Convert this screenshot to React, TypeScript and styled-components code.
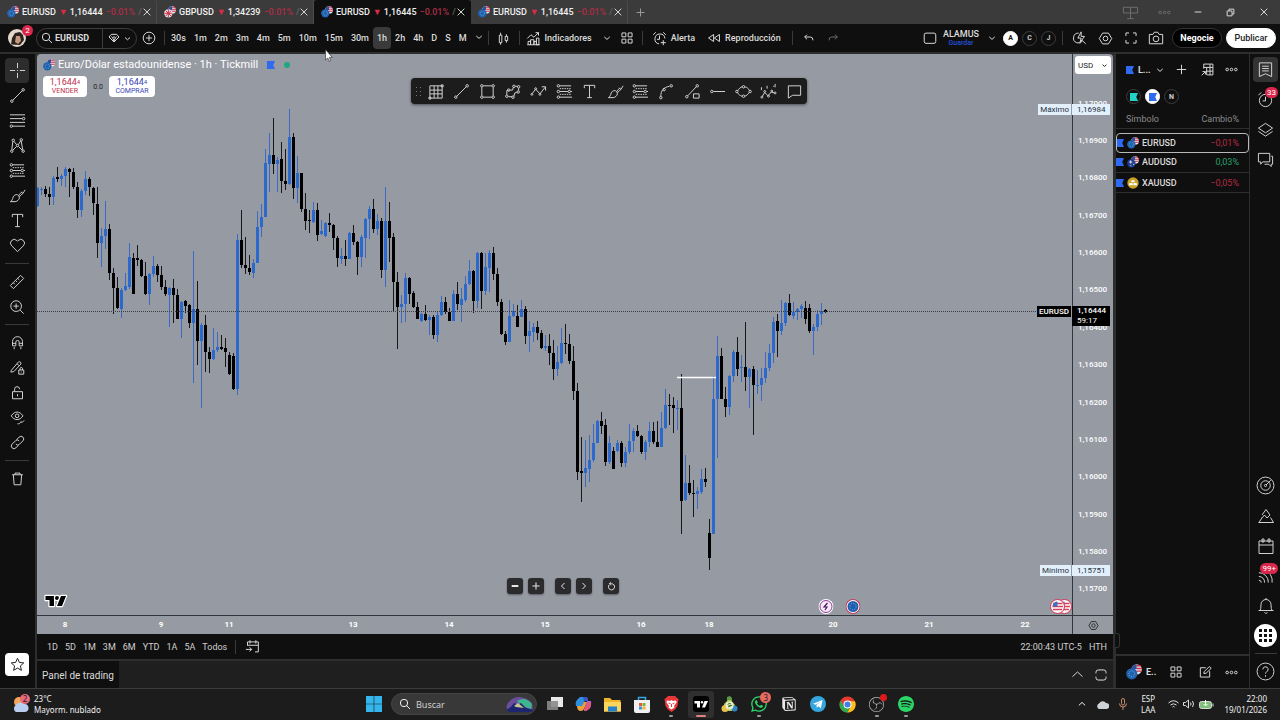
import React from 'react';
import styled, { createGlobalStyle, css } from 'styled-components';
import { FaWhatsapp } from 'react-icons/fa';
import { SiSpotify, SiNotion, SiObsstudio, SiBrave } from 'react-icons/si';

const UI_FONT = 'Roboto, "Liberation Sans", sans-serif';
const OS_FONT = '"Noto Sans", "Open Sans", sans-serif';

const GlobalStyle = createGlobalStyle`
  *, *::before, *::after { box-sizing: border-box; }
  body { margin: 0; background: #0f0f0f; font-family: ${UI_FONT}; color: #dbdbdb; overflow: hidden; }
  button, input, select { font-family: inherit; color: inherit; margin: 0; }
  button { background: none; border: 0; padding: 0; display: inline-flex; align-items: center; justify-content: center; cursor: pointer; }
  svg { display: block; flex: none; }
`;

/* ---------- line icons, drawn on an 18 unit grid ---------- */

const dot = (x: number, y: number, r = 1.3) => <circle key={`${x}-${y}`} cx={x} cy={y} r={r} />;

const ICONS: Record<string, React.ReactNode> = {
  cross: <path d="M9 1v5.5M9 11.5V17M1 9h5.5M11.5 9H17M8.5 9h1" />,
  trend: <><path d="M4 14 14 4" />{dot(3, 15)}{dot(15, 3)}</>,
  lines: <><path d="M1 3h16M1 7h13M1 11h16M4 15h13" />{dot(15.5, 7)}{dot(2.5, 15)}</>,
  pattern: <><path d="M3 13.5 4 5M5.200 4.500 8 8M10 10l4 4M13 4.500l1.500 9M8 10l-4 4M10 8l2.500-4" />{dot(3, 15)}{dot(4.5, 3.5)}{dot(13, 3)}{dot(15, 15)}{dot(9, 9)}</>,
  fib: <><path d="M4 3h12M4 9h8.500M15.500 9H17M4 15h13" /><path d="M4 6h12M4 12h12" strokeDasharray="1.500 1" />{dot(2.5, 3)}{dot(2.5, 9)}{dot(14, 9)}{dot(2.5, 15)}</>,
  brush: <path d="M1.500 15.500c2-1 2-2.500 3-5C5.500 8 9 7 10.500 9.500c1.500 3-1 5.500-4 6zM10.500 9c1-2 2-3 3.500-3.500M11 10c2.500-1.500 4.500-4 6-7M13 5l1.500 2" />,
  text: <path d="M3.500 5.500v-3h11v3M9 2.500v13M6.500 15.500h5" />,
  heart: <path d="M9 15.500 2.800 9.300a3.900 3.900 0 0 1 0-5.600 3.900 3.900 0 0 1 5.500 0l.7.800.7-.8a3.900 3.900 0 0 1 5.500 0 3.900 3.900 0 0 1 0 5.600z" />,
  ruler: <path d="M1.500 13 13 1.500 16.500 5 5 16.500zM5 10l1.500 1.500M7.500 7.500 9 9M10 5l1.500 1.500" />,
  zoomin: <><circle cx="8" cy="8" r="6" /><path d="M12.500 12.500 16.500 16.500M5 8h6M8 5v6" /></>,
  magnet: <path d="M3 13V8a6 6 0 0 1 12 0v5h-4V8.500a2 2 0 0 0-4 0V13zM3 10h4M11 10h4M5 14.500V17M13 14.500V17" />,
  penlock: <><path d="M1.500 12.500 10 2.500a2 2 0 0 1 3 2.500L4.500 14l-3.500.500zM8.500 4.500l2.500 2.500" /><path d="M10.500 12h6v5h-6zM12 12v-1.500a1.500 1.500 0 0 1 3 0V12M13.500 14v1" /></>,
  unlock: <path d="M3 8h12v8.500H3zM5.500 8V5a3 3 0 0 1 6 0M9 11v2.500" />,
  eye: <><path d="M1.500 7C4 3.500 6 2.500 8.500 2.500S13.500 4 15.500 7C13.500 10 11.500 11.500 8.500 11.500S3.500 10 1.500 7z" /><circle cx="8.5" cy="7" r="2.2" /><path d="M9 16.500c2 .5 3.500-.5 4-2.500l1.500 1L17 12.500" /></>,
  link: <path d="M8 5.500l3-3a3 3 0 0 1 4.500 4.500l-4 4A3 3 0 0 1 7 11M10 12.500l-3 3A3 3 0 0 1 2.500 11l4-4A3 3 0 0 1 11 7" />,
  trash: <path d="M2.500 4.500h13M6 4.500v-2h6v2M4 4.500 5 16.500h8l1-12" />,
  star: <path d="M9 1.500l2.200 5 5.300.600-4 3.600 1.200 5.300L9 13.300 4.300 16l1.200-5.300-4-3.600 5.300-.600z" />,
  grid9: <path d="M2 3h13v13H2zM2 7.500h13M2 11.500h13M6.500 3v13M10.500 3v13M1 15h2v2H1zM14 2h2v2h-2z" />,
  rect: <><path d="M4.500 3h9M4.500 15h9M3 4.500v9M15 4.500v9" />{dot(3, 3)}{dot(15, 3)}{dot(3, 15)}{dot(15, 15)}</>,
  shape: <><path d="M3 12.500V8h2M6.500 7.500H9L10 4.500M4.500 14.500h4M10.500 14l1-3.500 2-.500M15.500 8V5.500M12 3.500h2.500" />{dot(5, 7.5)}{dot(10.5, 3.5)}{dot(15.5, 4)}{dot(3, 14)}{dot(9.5, 15)}{dot(15, 9.5)}</>,
  zigzag: <><path d="M2.500 11 6 6.500l4.500 5L16 4.500M12.500 4h4v4" />{dot(2, 12, 1)}{dot(6, 6, 1)}{dot(10.5, 12, 1)}</>,
  curve: <><path d="M3 14c0-6 3-9.500 9-10.500" />{dot(3, 15.5)}{dot(6.5, 7)}{dot(14, 3)}</>,
  lineshape: <><path d="M4 13.500 13 4M10 11.500h6v4.500h-6z" />{dot(3, 14.5)}{dot(14, 3)}</>,
  hline: <><path d="M4.500 9H17" />{dot(3, 9)}</>,
  ellipse: <><path d="M3 8c1-2 3-3.500 4.500-4M10.500 4c2 .5 4 2 5 4M15 10c-1 2-3 3.500-4.500 4M7.500 14c-2-.5-4-2-5-4" />{dot(9, 4)}{dot(16, 9)}{dot(9, 14)}{dot(2, 9)}</>,
  elliott: <><path d="M2.500 14 5 10l3.500 3.500 3.500-4 3 1M1.500 4.500v3M7.500 3v3M16 1v3.500M14 3.500h1" />{dot(2, 15, 1)}{dot(5, 9, 1)}{dot(9, 14, 1)}{dot(12.500, 8.500, 1)}{dot(16, 10.500, 1)}</>,
  note: <path d="M2.500 3h13v10H7l-4.500 3z" />,
  candles: <path d="M4 5h3v9H4zM5.500 2v3M5.500 14v2.500M11 6.500h3v5h-3zM12.500 4v2.500M12.500 11.500V14" />,
  indicators: <><path d="M2.500 16.500v-4h3v4M5.500 16.500v-6h4v6M9.500 16.500v-4h3v4M12.500 16.500v-8h3v8zM1.500 16.500h15" /><path d="M1.500 9 6 4.500l3.500 3L15 2M11.500 2H15v3.500" /></>,
  layouts: <path d="M2.500 2.500h5v5h-5zM10.500 2.500h5v5h-5zM2.500 10.500h5v5h-5zM10.500 10.500h5v5h-5z" />,
  alarm: <path d="M15.500 9a6 6 0 1 0-7 6.500M9 5.500V10H6M1.500 4.500l3-3M16.500 4.500l-3-3M13.500 11v6M10.500 14h6" />,
  alarmPlain: <><circle cx="9" cy="10" r="6.5" /><path d="M9 6v4.500H6M1.500 4.500l3-3" /></>,
  rewind: <path d="M8.500 4.500v9L2 9zM16 4.500v9L9.500 9z" />,
  undo: <path d="M6 4 2.500 7.500 6 11M2.500 7.500H11q4 0 4 5" />,
  redo: <path d="M12 4l3.500 3.500L12 11M15.500 7.500H7q-4 0-4 5" />,
  square: <rect x="2.5" y="3.500" width="13" height="11.500" rx="2" />,
  quick: <><path d="M8 2.500a6 6 0 1 0 5 9M12.500 11.500l4 4M11 1 7 8.500h4L9.500 14 15 6.500h-4z" /></>,
  hex: <><path d="M5.500 2.500h7L16.500 9l-4 6.500h-7L1.500 9z" /><circle cx="9" cy="9" r="2.8" /></>,
  full: <path d="M2.500 6.500v-4h4M11.500 2.500h4v4M15.500 11.500v4h-4M6.500 15.500h-4v-4" />,
  camera: <><path d="M1.500 5h4l1.500-2.500h4L12.500 5h4v10.500h-15z" /><circle cx="9" cy="10" r="3.2" /></>,
  plus: <path d="M9 2.500v13M2.500 9h13" />,
  plusCircle: <><circle cx="9" cy="9" r="7.5" /><path d="M9 5v8M5 9h8" /></>,
  search: <><circle cx="7.5" cy="7.5" r="5.5" /><path d="M11.500 11.500 16.500 16.500" /></>,
  gem: <path d="M5 3.500h8l3.500 4L9 15 1.500 7.500zM5 7l2 1.500L9 7l2 1.500L13 7M7 8.500 9 14l2-5.500" />,
  chev: <path d="M4 7l5 4.500L14 7" />,
  chevUp: <path d="M2 12l7-6.500 7 6.500" />,
  close: <path d="M4 4l10 10M14 4 4 14" />,
  dots: <>{dot(3, 9, 1.8)}{dot(9, 9, 1.8)}{dot(15, 9, 1.8)}</>,
  min: <path d="M4 9h10" />,
  restore: <path d="M3.500 6.500h8v8h-8zM6.500 6.500v-3h8v8h-3" />,
  dock: <path d="M1.500 3.500h15v6h-15zM9 3.500v12M5.500 15.500h7" />,
  list: <><path d="M2.500 2h13v14.500L9 13.500l-6.500 3z" /><path d="M5.500 5.500h7M5.500 8h7M5.500 10.500h7" /></>,
  layers: <path d="M9 2.500 16.500 7.500 9 12.500 1.500 7.500zM1.500 11 9 16l7.500-5" />,
  chat: <path d="M1.500 2.500h12v9H6l-2 2.500v-2.500H1.500zM15 5.500h1.500V14H15v2.500L12.500 14H8" />,
  radar: <><circle cx="9" cy="9" r="8" /><circle cx="9" cy="9" r="4.5" /><circle cx="9" cy="9" r="1" /><path d="M9.500 8.500 14 4" /></>,
  mountain: <path d="M9 2.500 13 8l-3 3-2.500-3-2 2.500M9 2.500 5 8M2 15.500 5.500 10M16.500 15.500 13.500 10.500M1.500 15.500h15" />,
  calendar: <><path d="M2 4h14v12.500H2zM2 8h14" /><path d="M5 2h2v3H5zM11 2h2v3h-2z" /></>,
  stream: <path d="M2 6a10 10 0 0 1 10 10.500M7 3a12 12 0 0 1 9 13.500M2 10a6 6 0 0 1 6 6.500M2 14a2.500 2.500 0 0 1 2.500 2.500" />,
  bell: <path d="M3 13.500q1-1 1-6a5 5 0 0 1 10 0q0 5 1 6zM1.500 13.500h15M7.500 15.500a1.800 1.800 0 0 0 3 0M9 1v1.500" />,
  help: <><circle cx="9" cy="9" r="8" /><path d="M6.500 7a2.500 2.500 0 1 1 3.500 2.300q-1 .5-1 1.700M9 12.500v1.500" /></>,
  tableIcon: <path d="M4.500 2.500h11v13h-7M15.500 6.500h-11M15.500 11h-8M8 6.500v9M12 2.500v13M4.500 2.500V8M2 16l4.500-4.500M3 11.500h3.500V15" />,
  edit: <path d="M10 3.500H3v12h12V8M7.500 11 8 8.500 14.500 2 17 4.200 10.500 10.500z" />,
  goto: <path d="M3 8V3.500h13v12h-4M6 1.500v4M13 1.500v4M3 7.500h13M1 12.500h7M5.500 10 8 12.500 5.500 15" />,
  panel: <path d="M2.500 7V5.500q0-3 3-3H7M11 2.500h1.500q3 0 3 3V7M15.500 11v1.500q0 3-3 3H11M7 15.500H5.500q-3 0-3-3V11M6.500 2.500h5M6.500 15.500h5" />,
  reset: <path d="M5 6.500a5 5 0 1 0 4-2H6M8 2 5.500 4.500 8 7" />,
};

interface IconProps { name: string; size?: number; weight?: number }
const Icon = ({ name, size = 18, weight = 1 }: IconProps) => (
  <svg width={size} height={size} viewBox="0 0 18 18" fill="none" stroke="currentColor" strokeWidth={(weight * 18) / size} aria-hidden="true">
    {ICONS[name]}
  </svg>
);

/* ---------- currency pair badges ---------- */

type Pair = 'EUR' | 'GBP' | 'AUD' | 'XAU';
const PairIcon = ({ pair, size = 13 }: { pair: Pair; size?: number }) => (
  <svg width={size} height={size} viewBox="0 0 18 18" aria-hidden="true">
    {pair === 'XAU' ? (
      <>
        <circle cx="9" cy="9" r="8.5" fill="#c9a227" />
        <path d="M7 5h4l1 3H6zM3.500 9h4.500l1 3.500H2.800zM10 9h4.500l.8 3.500H9.300z" fill="#fff" />
      </>
    ) : (
      <>
        <circle cx="12" cy="6" r="5.8" fill="#e8e8f0" />
        <path d="M12 2h4.500M12 5h6M12 8h5.500" stroke="#d4283c" strokeWidth="1.6" />
        <path d="M6.300 6A5.800 5.800 0 0 1 12 .2V6z" fill="#2f4f9f" />
        <circle cx="6.5" cy="11" r="6.3" fill={pair === 'EUR' ? '#1f63b0' : pair === 'GBP' ? '#e9dfe6' : '#1c3f94'} />
        {pair === 'EUR' && <circle cx="6.500" cy="11" r="3.300" fill="none" stroke="#9fc0d8" strokeWidth="1" strokeDasharray="1 1.500" />}
        {pair === 'GBP' && <path d="M.5 11h12M6.500 5v12M2.500 7l8 8M10.500 7l-8 8" stroke="#c8324a" strokeWidth="1.500" />}
        {pair === 'AUD' && <path d="M3 9h5M5.500 6.500v5M9 12.500h2M5 14.500h1.500" stroke="#f0d8e0" strokeWidth="1.400" />}
      </>
    )}
  </svg>
);

const Flag = ({ color = '#2f6bf2', size = 9 }: { color?: string; size?: number }) => (
  <svg width={size} height={size} viewBox="0 0 9 9" aria-hidden="true"><path d="M0 0h9L7 4.500 9 9H0z" fill={color} /></svg>
);

/* ---------- frame ---------- */

const Page = styled.div`
  position: relative;
  display: flex;
  flex-direction: column;
  height: 100vh;
  min-height: 640px;
  font-size: 9px;
  line-height: 12px;
`;

const TabBar = styled.header`
  display: flex;
  align-items: stretch;
  height: 24px;
  background: #3b3b3b;
`;

const Tab = styled.div<{ $active?: boolean }>`
  display: flex;
  align-items: center;
  flex: 0 0 157px;
  min-width: 0;
  gap: 3px;
  padding: 0 3px 1px 7px;
  font-weight: 500;
  color: #f0f0f0;
  border-right: 1px solid ${p => (p.$active ? 'transparent' : '#4a4a4a')};
  background: ${p => (p.$active ? '#0f0f0f' : 'transparent')};
  border-radius: 3px 3px 0 0;
`;
const TabText = styled.span` flex: 1; min-width: 0; display: flex; gap: 3px; white-space: nowrap; `;
const Down = styled.span` width: 8px; color: #d92b48; `;
const Loss = styled.span` color: #ad2d45; `;
const Faint = styled.span` color: #666; `;
const IconButton = styled.button<{ $w?: number; $dim?: boolean }>`
  width: ${p => p.$w ?? 18}px;
  height: 20px;
  flex: none;
  color: ${p => (p.$dim ? '#6d6d6d' : '#d6d6d6')};
`;
const NewTab = styled(IconButton)` height: 24px; color: #9a9a9a; `;
const WindowControls = styled.div`
  margin-left: auto;
  display: flex;
  align-items: center;
`;

const Toolbar = styled.nav`
  display: flex;
  align-items: center;
  height: 28px;
  padding: 0 4px 0 8px;
  background: #0f0f0f;
  font-weight: 500;
`;
const VRule = styled.span<{ $m?: number }>`
  width: 1px;
  height: 14px;
  flex: none;
  margin: 0 ${p => p.$m ?? 4}px;
  background: #3a3a3a;
`;
const AvatarButton = styled.button`
  position: relative;
  width: 18px;
  height: 18px;
  margin-right: 10px;
`;
const Badge = styled.span`
  position: absolute;
  top: -4px;
  right: -7px;
  min-width: 11px;
  height: 11px;
  padding: 0 2px;
  border-radius: 6px;
  background: #d9274b;
  color: #fff;
  font-size: 8px;
  line-height: 11px;
  text-align: center;
`;
const SearchPill = styled.div`
  display: flex;
  align-items: center;
  height: 21px;
  border: 1px solid #3d3d3d;
  border-radius: 11px;
  padding-left: 4px;
  margin-right: 4px;
`;
const SymbolButton = styled.button` gap: 2px; width: 61px; justify-content: flex-start; font-size: 9px; font-weight: 700; height: 19px; `;
const GemButton = styled.button` width: 34px; height: 19px; gap: 3px; border-left: 1px solid #3d3d3d; `;
const Interval = styled.button<{ $on?: boolean }>`
  padding: 0 4px;
  height: 22px;
  font-size: 9px;
  font-weight: 500;
  border-radius: 4px;
  background: ${p => (p.$on ? '#3a3a3a' : 'none')};
`;
const Intervals = styled.div` display: flex; margin-left: -5px; `;
const TextButton = styled.button`
  gap: 4px;
  height: 22px;
  padding: 0 7px 0 5px;
  font-size: 9px;
  font-weight: 500;
`;
const ToolbarEnd = styled.div` margin-left: auto; display: flex; align-items: center; `;
const LayoutName = styled.button`
  flex-direction: column;
  width: 44px;
  font-size: 9px;
  line-height: 9px;
  font-weight: 500;
  small { font-size: 7px; line-height: 8px; color: #2450d8; }
`;
const RoundLetter = styled.button<{ $on?: boolean }>`
  width: 15px;
  height: 15px;
  margin: 0 2px;
  border-radius: 50%;
  font-size: 7px;
  font-weight: 700;
  border: 1px solid ${p => (p.$on ? '#fff' : '#3d3d3d')};
  background: ${p => (p.$on ? '#fff' : 'none')};
  color: ${p => (p.$on ? '#111' : '#cfcfcf')};
`;
const Pill = styled.button<{ $light?: boolean }>`
  height: 20px;
  width: 50px;
  margin-left: 4px;
  border-radius: 10px;
  font-size: 9px;
  font-weight: ${p => (p.$light ? 500 : 700)};
  border: 1px solid ${p => (p.$light ? '#fff' : '#333')};
  background: ${p => (p.$light ? '#fff' : '#000')};
  color: ${p => (p.$light ? '#222' : '#fff')};
`;

const Main = styled.main`
  flex: 1;
  min-height: 0;
  display: flex;
  background: #2e2e2e;
`;

const DrawRail = styled.aside`
  width: 35px;
  margin-right: 2px;
  margin-top: 2px;
  padding: 4px 6px 12px 5px;
  display: flex;
  flex-direction: column;
  background: #0f0f0f;
`;
const ToolButton = styled.button<{ $on?: boolean; $light?: boolean }>`
  width: 24px;
  height: 25px;
  flex: none;
  border-radius: 4px;
  color: #cfcfcf;
  ${p => p.$on && css`background: #2d2d2d;`}
  ${p => p.$light && css`height: 23px; margin-top: auto; background: #fff; color: #222;`}
`;
const HRule = styled.hr` width: 24px; height: 1px; flex: none; margin: 5px 0; border: 0; background: #3a3a3a; `;

const Center = styled.section` flex: 1; min-width: 0; padding-top: 2px; display: flex; flex-direction: column; `;

const ChartFrame = styled.div`
  position: relative;
  flex: 1;
  min-height: 0;
  display: grid;
  grid-template-columns: minmax(0, 1fr) 41px;
  grid-template-rows: minmax(0, 1fr) 19px;
  background: #969aa3;
  border-radius: 4px 4px 0 0;
  overflow: hidden;
`;
const Plot = styled.div` position: relative; min-height: 0; svg.candles { width: 100%; height: 100%; } `;
const PriceScale = styled.div`
  position: relative;
  border-left: 1px solid #33353c;
  display: flex;
  flex-direction: column;
  padding: 2px 2px 7px;
  color: #fff;
  font-size: 8px;
  font-weight: 500;
`;
const Currency = styled.label`
  position: relative;
  height: 18px;
  margin-bottom: 11px;
  color: #222;
  svg { position: absolute; right: 3px; top: 6px; }
  select {
    appearance: none;
    display: block;
    width: 100%;
    height: 18px;
    padding: 0 3px;
    border: 0;
    border-radius: 3px;
    background: #fff;
    font-size: 8px;
  }
`;
const PriceList = styled.ol`
  flex: 1;
  display: flex;
  flex-direction: column;
  list-style: none;
  margin: 0;
  padding: 0;
  li { flex: 1; display: flex; align-items: center; padding-left: 3px; }
`;
const TimeScale = styled.div`
  border-top: 1px solid #33353c;
  display: flex;
  align-items: center;
  padding-left: 28px;
  color: #fff;
  font-size: 8px;
  font-weight: 700;
`;
const TimeSlot = styled.span<{ $span: number }>`
  flex: ${p => p.$span} 0 0;
  min-width: 0;
  span { display: inline-block; transform: translateX(-50%); }
`;
const ScaleCorner = styled.div` border-top: 1px solid #33353c; border-left: 1px solid #33353c; display: flex; align-items: center; justify-content: center; color: #333; `;

const PriceTag = styled.div<{ $top: number; $dark?: boolean }>`
  position: absolute;
  right: 3px;
  top: ${p => p.$top}%;
  display: flex;
  align-items: flex-start;
  gap: 1px;
  font-size: 8px;
  line-height: 11px;
  color: ${p => (p.$dark ? '#fff' : '#26303f')};
  font-weight: ${p => (p.$dark ? 500 : 400)};
  span { padding: 0 2px; background: ${p => (p.$dark ? '#000' : '#e3f0fb')}; }
  span:last-child { width: 38px; padding: 0 5px; line-height: ${p => (p.$dark ? 10 : 11)}px; }
  small { display: block; font-size: 8px; font-weight: 400; }
`;

const Legend = styled.div`
  position: absolute;
  left: 6px;
  top: 4px;
  display: flex;
  align-items: center;
  gap: 3px;
  color: #fff;
  font-size: 11px;
  font-weight: 400;
  line-height: 14px;
  white-space: nowrap;
`;
const LiveDot = styled.span` width: 6px; height: 6px; margin-left: 6px; border-radius: 50%; background: #1fa882; `;
const LegendFlag = styled.span` margin-left: 6px; `;
const Quotes = styled.div` position: absolute; left: 6px; top: 22px; display: flex; align-items: center; gap: 5px; font-size: 7px; color: #222; `;
const QuoteButton = styled.button<{ $buy?: boolean }>`
  flex-direction: column;
  width: ${p => (p.$buy ? 46 : 44)}px;
  height: 21px;
  border-radius: 4px;
  background: #fff;
  color: ${p => (p.$buy ? '#3a45b5' : '#c0304c')};
  font-size: 9px;
  line-height: 9px;
  b { font-weight: 400; display: flex; }
  sup { font-size: 6px; line-height: 7px; vertical-align: baseline; }
  span { font-size: 7px; line-height: 9px; }
`;
const Spread = styled.span` width: 12px; text-align: center; `;
const FloatingTools = styled.div`
  position: absolute;
  left: 374px;
  top: 24px;
  width: 396px;
  height: 26px;
  padding: 0 0 0 4px;
  display: flex;
  align-items: center;
  justify-content: space-between;
  background: #1c1c1c;
  color: #d0d0d0;
  border-radius: 4px;
  box-shadow: 0 1px 3px rgba(0, 0, 0, 0.5);
  button { width: 25px; height: 24px; }
`;
const Grip = styled.span` width: 8px; `;
const ZoomControls = styled.div` position: absolute; left: 470px; bottom: 21px; display: flex; gap: 5px; color: #e6e6e6; `;
const ZoomButton = styled.button<{ $gap?: boolean }>`
  width: 16px;
  height: 16px;
  margin-left: ${p => (p.$gap ? 6 : 0)}px;
  border-radius: 3px;
  background: #2b2b2e;
  box-shadow: 0 1px 2px rgba(0, 0, 0, 0.4);
`;
const Logo = styled.a` position: absolute; left: 7px; bottom: 7px; `;
const EventMark = styled.button<{ $left: number }>` position: absolute; left: ${p => p.$left}%; bottom: 1px; transform: translateX(-50%); `;

const RangeBar = styled.div`
  height: 25px;
  display: flex;
  align-items: center;
  padding: 0 2px 0 7px;
  background: #0f0f0f;
  color: #cfcfcf;
`;
const RangeButton = styled.button` height: 20px; padding: 0 4px 0 3px; font-size: 9px; `;
const Clock = styled.div` margin-left: auto; display: flex; `;
const TradingBar = styled.div`
  height: 27px;
  margin-top: 2px;
  display: flex;
  align-items: center;
  background: #1f1f1f;
`;
const TradingTab = styled.button` height: 27px; padding: 1px 5px 0; background: #0f0f0f; font-size: 10px; color: #dbdbdb; `;

const WatchPanel = styled.aside`
  position: relative;
  width: 133px;
  margin: 2px 1px 0 3px;
  display: flex;
  flex-direction: column;
  background: #0f0f0f;
`;
const WatchHead = styled.div` display: flex; align-items: center; justify-content: space-between; height: 31px; padding: 0 11px 0 10px; `;
const ListButton = styled.button` gap: 4px; font-size: 9px; font-weight: 700; `;
const Lists = styled.div` display: flex; gap: 0; padding: 4px 8px 0; height: 25px; `;
const WatchTable = styled.table`
  width: 100%;
  border-collapse: collapse;
  font-size: 9px;
  th { height: 18px; padding: 0 10px; font-weight: 400; color: #8c8c8c; text-align: left; border-bottom: 1px solid #2e2e2e; }
  th:last-child, td:last-child { text-align: right; }
  td { height: 20px; padding: 0 10px 0 0; border-bottom: 1px solid #2e2e2e; font-weight: 500; }
  td:last-child { font-weight: 400; }
  tbody::before { content: ''; display: block; height: 4px; }
  tr.on td { border: 0; }
  tr.on { outline: 1px solid #b8b8b8; outline-offset: -1px; border-radius: 4px; }
`;
const SymbolCell = styled.span` display: flex; align-items: center; gap: 3px; b { font-weight: 500; } `;
const Change = styled.span<{ $up?: boolean }>` color: ${p => (p.$up ? '#25a06c' : '#b32b44')}; `;
const Handle = styled.span` position: absolute; left: -1px; bottom: 40px; width: 5px; height: 15px; border: 1px solid #333; border-left: 0; border-radius: 0 3px 3px 0; background: #0f0f0f; `;
const WatchFoot = styled.div`
  margin-top: auto;
  height: 34px;
  border-top: 2px solid #2e2e2e;
  display: flex;
  align-items: center;
  justify-content: space-between;
  padding: 0 10px;
`;

const RightRail = styled.aside`
  width: 30px;
  margin-top: 2px;
  padding: 3px 2px 4px 3px;
  display: flex;
  flex-direction: column;
  align-items: center;
  gap: 5px;
  background: #0f0f0f;
`;
const RailButton = styled.button<{ $on?: boolean; $push?: boolean }>`
  position: relative;
  width: 25px;
  height: 25px;
  flex: none;
  border-radius: 4px;
  color: #d0d0d0;
  background: ${p => (p.$on ? '#333' : 'none')};
  margin-top: ${p => (p.$push ? 'auto' : 0)};
`;
const RailBadge = styled(Badge)` top: 0; right: 0; `;
const RailRule = styled(HRule)` margin: 0; width: 22px; `;
const Apps = styled.span`
  width: 23px;
  height: 23px;
  border-radius: 50%;
  background: #fff;
  display: flex;
  align-items: center;
  justify-content: center;
`;

const Taskbar = styled.footer`
  height: 32px;
  flex: none;
  display: grid;
  grid-template-columns: 1fr auto 1fr;
  align-items: center;
  padding-bottom: 1px;
  background: #1c1c1c;
  border-top: 1px solid #3c3c3c;
  font-family: ${OS_FONT};
  font-size: 8px;
  line-height: 11px;
  color: #f0f0f0;
`;
const Weather = styled.button` justify-self: start; margin-left: 10px; gap: 3px; text-align: left; font-size: 8px; line-height: 11px; `;
const TaskCenter = styled.div` display: flex; align-items: center; `;
const TaskSearch = styled.label`
  display: flex;
  align-items: center;
  width: 146px;
  height: 22px;
  margin: 0 4px;
  padding: 0 1px 0 7px;
  border-radius: 11px;
  background: #383838;
  border: 1px solid #444;
  input { flex: 1; width: 0; margin-left: 5px; border: 0; outline: 0; background: none; font-size: 9px; padding: 0; }
  input::placeholder { color: #d0d0d0; opacity: 1; }
`;
const TaskApps = styled.div` display: flex; justify-content: space-between; width: 378px; `;
const TaskButton = styled.button<{ $on?: boolean }>`
  position: relative;
  width: 26px;
  height: 27px;
  border-radius: 3px;
  background: ${p => (p.$on ? '#2f2f2f' : 'none')};
`;
const Running = styled.span<{ $on?: boolean }>`
  position: absolute;
  bottom: 1px;
  width: ${p => (p.$on ? 10 : 4)}px;
  height: 2px;
  border-radius: 1px;
  background: ${p => (p.$on ? '#e08080' : '#9a9a9a')};
`;
const AppBadge = styled.span` position: absolute; top: 1px; right: 1px; width: 11px; height: 11px; border-radius: 50%; background: #e8695f; color: #222; font-size: 8px; line-height: 11px; text-align: center; `;
const RecDot = styled.span` position: absolute; top: 3px; right: 3px; width: 7px; height: 7px; border-radius: 50%; background: #e01818; `;
const Tray = styled.div` justify-self: end; display: flex; align-items: center; gap: 10px; padding-right: 13px; `;
const TrayGroup = styled.span` display: flex; gap: 4px; align-items: center; margin-left: 3px; `;
const TrayLang = styled.span` text-align: center; margin-left: 4px; `;
const TrayClock = styled.time` text-align: right; `;

const Pointer = styled.div` position: absolute; left: 325px; top: 49px; pointer-events: none; `;

/* ---------- chart data: colour, high, body top, body bottom, low ---------- */

const CANDLES = `
b187,188,206,207 b187,189,190,195 k186,189,194,197 k187,194,197,205 b176,178,197,205 k167,177,179,182 b174,176,179,186 b167,169,176,187 k168,169,172,197 k168,172,187,189
k182,187,210,218 b189,191,210,217 b171,179,191,195 k177,179,187,196 k187,188,203,215 k187,204,243,258 b228,236,243,267 b201,229,236,249 k224,229,273,280 k268,273,288,314
k277,288,308,309 b288,290,309,318 b273,286,290,291 b243,257,287,289 k253,258,294,294 k245,258,260,266 k259,260,276,277 k262,276,294,295 b273,274,294,305 b256,266,274,277
k264,266,275,282 k266,275,287,290 k280,287,294,296 b287,288,295,327 k279,288,295,323 k289,295,319,319 b301,302,319,338 k300,301,306,313 k304,305,323,328 b251,309,323,383
k281,309,341,365 b323,325,341,408 k315,325,352,372 k347,352,359,373 b328,350,359,360 b332,347,350,352 k335,347,349,350 k338,348,352,367 k352,355,374,375 k353,356,389,390
b234,240,389,395 k210,240,265,268 k237,265,268,274 k255,268,272,275 b259,263,273,278 b211,227,263,263 b204,217,227,237 b149,163,217,217 b133,155,164,192 k118,155,164,174
b157,160,164,192 k142,159,181,193 k149,181,184,190 b109,137,184,185 k133,137,188,199 b156,173,188,203 k173,173,209,212 k193,209,221,230 k210,220,221,233 b202,210,222,223
k203,210,235,241 b220,231,234,235 b222,223,236,237 k213,223,225,232 k224,225,238,250 k236,238,258,267 b248,256,259,264 k240,256,259,266 b232,233,259,259 k225,233,242,245
k241,242,257,275 b235,237,257,267 b218,219,238,258 b206,209,219,239 k199,209,229,233 b214,221,229,235 k218,221,270,278 b187,221,270,287 k202,221,238,262 k233,237,282,312
k272,282,307,349 b295,304,307,323 b273,278,304,322 k277,278,294,304 k291,293,307,308 k302,307,319,319 b313,314,321,322 k305,314,320,321 b315,317,320,335 k315,317,335,339
b311,315,335,342 b296,302,315,316 k297,302,312,314 k308,312,321,321 b290,294,321,321 k282,294,304,310 b288,299,305,322 b276,284,300,302 b260,271,284,285 k270,271,301,313
b252,253,301,308 k252,253,291,309 b253,267,291,295 b250,253,268,292 k247,253,274,280 k268,274,302,306 k299,302,334,335 k331,334,342,345 b300,316,342,342 b304,311,316,317
k305,316,327,327 b300,309,317,317 k306,309,336,344 b321,331,336,352 b323,327,332,342 k321,327,333,340 k330,333,348,349 b335,346,348,351 k334,346,353,365 k340,353,369,380
b346,362,369,376 b328,343,363,364 k324,343,344,354 k334,344,361,364 k346,361,391,400 k383,391,472,480 k437,471,473,502 b440,468,473,487 b435,460,469,482 b424,443,460,462
b420,421,443,443 k412,421,426,434 k419,425,462,466 b436,443,462,464 k447,451,469,469 b440,443,451,452 k441,443,463,467 b447,452,463,467 b424,441,452,454 b428,431,441,452
k425,431,436,437 k435,436,452,454 b440,442,452,460 b422,431,442,447 k422,431,442,444 k421,442,447,447 b412,428,447,447 b389,405,428,429 k394,405,406,425 k397,405,408,433
b400,408,409,430 k374,408,501,534 b455,483,500,501 k465,483,493,495 k480,493,494,517 b487,491,494,509 b469,479,492,494 k468,479,482,487 k519,533,558,570 b376,399,534,534
b336,356,399,458 k348,356,399,399 k387,399,407,417 b375,376,407,415 b350,352,376,382 k337,352,369,376 b355,367,368,382 k322,367,377,391 b368,369,377,408 k366,369,385,435
b370,385,386,394 b368,378,385,401 b352,368,378,383 b344,353,368,371 b317,322,353,363 k314,321,331,357 b300,323,331,335 b302,303,323,326 k294,303,315,316 b302,312,316,319
b308,309,312,320 b304,306,309,318 k301,308,319,324 k304,308,331,333 b324,327,331,355 b310,314,327,331 b303,311,314,325 k309,310,312,313
`.trim().split(/\s+/).map(s => ({ up: s[0] === 'b', v: s.slice(1).split(',').map(Number) }));

const Candles = () => (
  <svg className="candles" viewBox="37 54 1035 561" preserveAspectRatio="none" role="img" aria-label="EURUSD 1h">
    {CANDLES.map(({ up, v: [h, t, b, l] }, i) => (
      <g key={i}>
        <rect x={37 + i * 4} y={h} width="1" height={Math.max(1, l - h)} fill={up ? '#3b69c4' : '#17181c'} />
        <rect x={36 + i * 4} y={t} width="3" height={Math.max(1, b - t)} fill={up ? '#2c69cd' : '#000'} />
      </g>
    ))}
    <path d="M677 377.500h39" stroke="#fff" strokeWidth="1.4" />
    <path d="M37 311.500h1002" stroke="#3c3e46" strokeDasharray="1 1" />
  </svg>
);

const PRICES = ['1,17000', '1,16900', '1,16800', '1,16700', '1,16600', '1,16500', '1,16400', '1,16300', '1,16200', '1,16100', '1,16000', '1,15900', '1,15800', '1,15700'];
const DAYS: [string, number][] = [['8', 96], ['9', 68], ['11', 124], ['13', 96], ['14', 96], ['15', 96], ['16', 68], ['18', 124], ['20', 96], ['21', 96], ['22', 47]];
const TABS: { pair: Pair; name: string; price: string; on?: boolean }[] = [
  { pair: 'EUR', name: 'EURUSD', price: '1,16444' },
  { pair: 'GBP', name: 'GBPUSD', price: '1,34239' },
  { pair: 'EUR', name: 'EURUSD', price: '1,16445', on: true },
  { pair: 'EUR', name: 'EURUSD', price: '1,16445' },
];
const WATCH: { pair: Pair; name: string; change: string; up?: boolean }[] = [
  { pair: 'EUR', name: 'EURUSD', change: '−0,01%' },
  { pair: 'AUD', name: 'AUDUSD', change: '0,03%', up: true },
  { pair: 'XAU', name: 'XAUUSD', change: '−0,05%' },
];
const INTERVALS = ['30s', '1m', '2m', '3m', '4m', '5m', '10m', '15m', '30m', '1h', '2h', '4h', 'D', 'S', 'M'];
const FLOATING = ['grid9', 'trend', 'rect', 'shape', 'zigzag', 'fib', 'text', 'brush', 'fib', 'curve', 'lineshape', 'hline', 'ellipse', 'elliott', 'note'];

const TvMark = ({ width }: { width: number }) => (
  <svg width={width} height={(width * 14) / 24} viewBox="0 0 24 14" aria-hidden="true">
    <g fill="#000" stroke="#fff" strokeWidth="2.4" paintOrder="stroke" strokeLinejoin="round">
      <path d="M1.500 2h8.500v10H5.500V6H1.500z" /><circle cx="13" cy="4" r="2" /><path d="M17 2h5l-4 10h-5z" />
    </g>
  </svg>
);

const FlagMark = ({ kind }: { kind: 'bolt' | 'eu' | 'us' }) => (
  <svg width={kind === 'us' ? 22 : 15} height="15" viewBox={kind === 'us' ? '0 0 22 15' : '0 0 15 15'} aria-hidden="true">
    {kind === 'bolt' && <><circle cx="7.5" cy="7.5" r="7.5" fill="#fff" /><circle cx="7.5" cy="7.5" r="6" fill="#f6e9f8" stroke="#8b3a9c" /><path d="M9 4 5.500 8h3L6.500 11" fill="none" stroke="#4a1458" strokeWidth="1.2" /></>}
    {kind === 'eu' && <><circle cx="7.5" cy="7.5" r="7.5" fill="#c43a58" /><circle cx="7.5" cy="7.5" r="6.500" fill="#fff" /><circle cx="7.5" cy="7.5" r="5.500" fill="#1d5fae" /><circle cx="7.5" cy="7.5" r="3.2" fill="none" stroke="#8fb4d8" strokeDasharray="1 1.500" /></>}
    {kind === 'us' && [7, 0].map(x => (
      <g key={x} transform={`translate(${x} 0)`}>
        <circle cx="7.5" cy="7.5" r="7" fill="#fff" stroke="#d2304e" />
        <path d="M3 4.500h9.500M2.500 7.500h10.500M3 10.500h9" stroke="#d8405a" strokeWidth="1.5" />
        <path d="M2.500 7.500A5 5 0 0 1 7.500 2.500v5z" fill="#3d6fc4" />
      </g>
    ))}
  </svg>
);

const Chrome = () => (
  <svg width="17" height="17" viewBox="0 0 18 18" aria-hidden="true">
    <circle cx="9" cy="9" r="8.5" fill="#e33b2e" />
    <path d="M1.640 4.750A8.500 8.500 0 0 0 9 17.500l3.500-6.500L5.500 11z" fill="#2da94f" />
    <path d="M16.900 5.500H9l3.500 6L9 17.500A8.500 8.500 0 0 0 16.900 5.500z" fill="#fbc116" />
    <circle cx="9" cy="9" r="4.2" fill="#fff" /><circle cx="9" cy="9" r="3.2" fill="#3f7fe8" />
  </svg>
);

const Telegram = () => (
  <svg width="16" height="16" viewBox="0 0 16 16" aria-hidden="true">
    <circle cx="8" cy="8" r="8" fill="#35a6de" />
    <path d="M3 7.800 12.500 4l-1.600 8.300-2.700-2-1.400 1.400-.4-2.600L10.500 6 5.500 8.800z" fill="#fff" />
  </svg>
);

export default function App() {
  return (
    <>
      <GlobalStyle />
      <Page>
        <TabBar>
          {TABS.map((t, i) => (
            <Tab key={i} $active={t.on}>
              <PairIcon pair={t.pair} size={12} />
              <TabText><span>{t.name}</span><Down>▼</Down><span>{t.price}</span><Loss>−0.01%</Loss><Faint>/</Faint></TabText>
              <IconButton $w={12} aria-label="Cerrar pestaña"><Icon name="close" size={12} /></IconButton>
            </Tab>
          ))}
          <NewTab $w={24} aria-label="Nueva pestaña"><Icon name="plus" size={11} /></NewTab>
          <WindowControls>
            <IconButton $w={30} $dim aria-label="Acoplar"><Icon name="dock" size={17} /></IconButton>
            <VRule $m={1} />
            <IconButton $w={33} $dim aria-label="Más"><Icon name="dots" size={13} /></IconButton>
            <IconButton $w={33} aria-label="Minimizar"><Icon name="min" size={12} /></IconButton>
            <IconButton $w={33} aria-label="Restaurar"><Icon name="restore" size={11} /></IconButton>
            <IconButton $w={33} aria-label="Cerrar"><Icon name="close" size={12} /></IconButton>
          </WindowControls>
        </TabBar>

        <Toolbar>
          <AvatarButton aria-label="Perfil">
            <svg width="18" height="18" viewBox="0 0 18 18"><circle cx="9" cy="9" r="9" fill="#e4d8cc" /><path d="M3 15.500 4 9l3-5 5-1 3 3 1 5-4 5z" fill="#2b211e" /><path d="M8 7h4l1 5-3 3-3-2z" fill="#c79a80" /></svg>
            <Badge>2</Badge>
          </AvatarButton>
          <SearchPill>
            <SymbolButton><Icon name="search" size={12} />EURUSD</SymbolButton>
            <GemButton aria-label="Símbolos"><Icon name="gem" size={12} /><Icon name="chev" size={9} /></GemButton>
          </SearchPill>
          <IconButton $w={16} aria-label="Comparar"><Icon name="plusCircle" size={14} /></IconButton>
          <VRule $m={7} />
          <Intervals>
            {INTERVALS.map(t => <Interval key={t} $on={t === '1h'}>{t}</Interval>)}
            <IconButton $w={16} aria-label="Intervalos"><Icon name="chev" size={10} /></IconButton>
          </Intervals>
          <VRule $m={1} />
          <IconButton $w={28} aria-label="Velas"><Icon name="candles" size={15} /></IconButton>
          <VRule $m={1} />
          <TextButton><Icon name="indicators" size={15} />Indicadores</TextButton>
          <IconButton $w={17} aria-label="Favoritos"><Icon name="chev" size={10} /></IconButton>
          <IconButton $w={22} aria-label="Plantillas"><Icon name="layouts" size={14} /></IconButton>
          <VRule />
          <TextButton><Icon name="alarm" size={15} />Alerta</TextButton>
          <TextButton><Icon name="rewind" size={14} />Reproducción</TextButton>
          <VRule />
          <IconButton $w={24} aria-label="Deshacer"><Icon name="undo" size={12} /></IconButton>
          <IconButton $w={24} $dim aria-label="Rehacer"><Icon name="redo" size={12} /></IconButton>
          <ToolbarEnd>
            <IconButton aria-label="Diseño"><Icon name="square" size={16} /></IconButton>
            <LayoutName>ALAMUS<small>Guardar</small></LayoutName>
            <IconButton $w={18} aria-label="Diseños"><Icon name="chev" size={10} /></IconButton>
            <RoundLetter $on>A</RoundLetter><RoundLetter>C</RoundLetter><RoundLetter>J</RoundLetter>
            <VRule />
            <IconButton $w={25} aria-label="Búsqueda rápida"><Icon name="quick" size={15} /></IconButton>
            <IconButton $w={26} aria-label="Configuración"><Icon name="hex" size={15} /></IconButton>
            <IconButton $w={25} aria-label="Pantalla completa"><Icon name="full" size={14} /></IconButton>
            <IconButton $w={25} aria-label="Captura"><Icon name="camera" size={16} /></IconButton>
            <Pill>Negocie</Pill>
            <Pill $light>Publicar</Pill>
          </ToolbarEnd>
        </Toolbar>

        <Main>
          <DrawRail>
            {['cross', 'trend', 'lines', 'pattern', 'fib', 'brush', 'text', 'heart'].map(n => <ToolButton key={n} $on={n === 'cross'} aria-label={n}><Icon name={n} size={17} /></ToolButton>)}
            <HRule />
            {['ruler', 'zoomin'].map(n => <ToolButton key={n} aria-label={n}><Icon name={n} size={16} /></ToolButton>)}
            <HRule />
            {['magnet', 'penlock', 'unlock', 'eye', 'link'].map(n => <ToolButton key={n} aria-label={n}><Icon name={n} size={15} /></ToolButton>)}
            <HRule />
            <ToolButton aria-label="Eliminar"><Icon name="trash" size={15} /></ToolButton>
            <ToolButton $light aria-label="Favoritos"><Icon name="star" size={15} /></ToolButton>
          </DrawRail>

          <Center>
            <ChartFrame>
              <Plot>
                <Candles />
                <Legend>
                  <PairIcon pair="EUR" size={12} />
                  <span>Euro/Dólar estadounidense · 1h · Tickmill</span>
                  <LegendFlag><Flag size={8} /></LegendFlag>
                  <LiveDot />
                </Legend>
                <Quotes>
                  <QuoteButton><b>1,1644<sup>4</sup></b><span>VENDER</span></QuoteButton>
                  <Spread>0.0</Spread>
                  <QuoteButton $buy><b>1,1644<sup>4</sup></b><span>COMPRAR</span></QuoteButton>
                </Quotes>
                <FloatingTools>
                  <Grip><svg width="8" height="9" viewBox="0 0 8 9" fill="#777"><path d="M1 0h1v1H1zM5 0h1v1H5zM1 4h1v1H1zM5 4h1v1H5zM1 8h1v1H1zM5 8h1v1H5z" /></svg></Grip>
                  {FLOATING.map((n, i) => <button key={i} aria-label={n}><Icon name={n} size={17} /></button>)}
                </FloatingTools>
                <ZoomControls>
                  <ZoomButton aria-label="Alejar"><Icon name="min" size={12} weight={2} /></ZoomButton>
                  <ZoomButton aria-label="Acercar"><Icon name="plus" size={10} weight={1} /></ZoomButton>
                  <ZoomButton $gap aria-label="Izquierda"><svg width="8" height="8" viewBox="0 0 8 8" fill="none" stroke="currentColor"><path d="M5.500 1 2.500 4l3 3" /></svg></ZoomButton>
                  <ZoomButton aria-label="Derecha"><svg width="8" height="8" viewBox="0 0 8 8" fill="none" stroke="currentColor"><path d="M2.500 1l3 3-3 3" /></svg></ZoomButton>
                  <ZoomButton $gap aria-label="Restablecer"><Icon name="reset" size={11} /></ZoomButton>
                </ZoomControls>
                <Logo href="#" aria-label="TradingView"><TvMark width={24} /></Logo>
                <EventMark $left={76.2} aria-label="Evento"><FlagMark kind="bolt" /></EventMark>
                <EventMark $left={78.84} aria-label="Evento UE"><FlagMark kind="eu" /></EventMark>
                <EventMark $left={98.9} aria-label="Evento EE. UU."><FlagMark kind="us" /></EventMark>
              </Plot>
              <PriceScale>
                <Currency>
                  <select aria-label="Divisa" defaultValue="USD"><option>USD</option></select>
                  <Icon name="chev" size={7} />
                </Currency>
                <PriceList>{PRICES.map(p => <li key={p}>{p}</li>)}</PriceList>
              </PriceScale>
              <TimeScale>{DAYS.map(([d, s]) => <TimeSlot key={d} $span={s}><span>{d}</span></TimeSlot>)}</TimeScale>
              <ScaleCorner><Icon name="hex" size={11} /></ScaleCorner>
              <PriceTag $top={8.7}><span>Máximo</span><span>1,16984</span></PriceTag>
              <PriceTag $top={43.4} $dark><span>EURUSD</span><span>1,16444<small>59:17</small></span></PriceTag>
              <PriceTag $top={88.1}><span>Mínimo</span><span>1,15751</span></PriceTag>
            </ChartFrame>
            <RangeBar>
              {['1D', '5D', '1M', '3M', '6M', 'YTD', '1A', '5A', 'Todos'].map(r => <RangeButton key={r}>{r}</RangeButton>)}
              <VRule />
              <IconButton $w={24} aria-label="Ir a fecha"><Icon name="goto" size={15} /></IconButton>
              <Clock><RangeButton>22:00:43 UTC-5</RangeButton><RangeButton>HTH</RangeButton></Clock>
            </RangeBar>
            <TradingBar>
              <TradingTab>Panel de trading</TradingTab>
              <WindowControls>
                <IconButton $w={24} aria-label="Expandir"><Icon name="chevUp" size={13} /></IconButton>
                <IconButton $w={24} aria-label="Maximizar"><Icon name="panel" size={14} /></IconButton>
              </WindowControls>
            </TradingBar>
          </Center>

          <WatchPanel>
            <WatchHead>
              <ListButton><Flag size={8} />L...<Icon name="chev" size={10} /></ListButton>
              <IconButton aria-label="Añadir"><Icon name="plus" size={13} /></IconButton>
              <IconButton aria-label="Tabla"><Icon name="tableIcon" size={15} /></IconButton>
              <IconButton $w={14} aria-label="Más"><Icon name="dots" size={13} /></IconButton>
            </WatchHead>
            <Lists>
              <RoundLetter aria-label="Lista verde"><Flag color="#22d3c5" size={8} /></RoundLetter>
              <RoundLetter $on aria-label="Lista azul"><Flag size={8} /></RoundLetter>
              <RoundLetter>N</RoundLetter>
            </Lists>
            <WatchTable>
              <thead><tr><th>Símbolo</th><th>Cambio%</th></tr></thead>
              <tbody>
                {WATCH.map((w, i) => (
                  <tr key={w.name} className={i === 0 ? 'on' : undefined}>
                    <td><SymbolCell><Flag size={8} /><PairIcon pair={w.pair} size={12} /><b>{w.name}</b></SymbolCell></td>
                    <td><Change $up={w.up}>{w.change}</Change></td>
                  </tr>
                ))}
              </tbody>
            </WatchTable>
            <Handle />
            <WatchFoot>
              <ListButton><PairIcon pair="EUR" size={16} />E..</ListButton>
              <IconButton aria-label="Cuadrícula"><Icon name="layouts" size={14} /></IconButton>
              <IconButton aria-label="Editar"><Icon name="edit" size={14} /></IconButton>
              <IconButton $w={14} aria-label="Más"><Icon name="dots" size={13} /></IconButton>
            </WatchFoot>
          </WatchPanel>

          <RightRail>
            <RailButton $on aria-label="Lista de seguimiento"><Icon name="list" size={17} /></RailButton>
            <RailButton aria-label="Alertas"><Icon name="alarmPlain" size={17} /><RailBadge>33</RailBadge></RailButton>
            <RailButton aria-label="Árbol de objetos"><Icon name="layers" size={17} /></RailButton>
            <RailButton aria-label="Chats"><Icon name="chat" size={17} /></RailButton>
            <RailButton $push aria-label="Filtros"><Icon name="radar" size={19} /></RailButton>
            <RailButton aria-label="Pine"><Icon name="mountain" size={18} /></RailButton>
            <RailButton aria-label="Calendarios"><Icon name="calendar" size={18} /></RailButton>
            <RailButton aria-label="Comunidad"><Icon name="stream" size={17} /><RailBadge>99+</RailBadge></RailButton>
            <RailButton aria-label="Notificaciones"><Icon name="bell" size={18} /></RailButton>
            <RailButton aria-label="Productos"><Apps><svg width="13" height="13" viewBox="0 0 13 13" fill="#111"><path d="M0 0h3v3H0zM5 0h3v3H5zM10 0h3v3h-3zM0 5h3v3H0zM5 5h3v3H5zM10 5h3v3h-3zM0 10h3v3H0zM5 10h3v3H5zM10 10h3v3h-3z" /></svg></Apps></RailButton>
            <RailRule />
            <RailButton aria-label="Ayuda"><Icon name="help" size={19} /></RailButton>
          </RightRail>
        </Main>

        <Taskbar>
          <Weather>
            <svg width="21" height="20" viewBox="0 0 21 20"><circle cx="9" cy="8" r="5" fill="#f2a35c" /><path d="M6 18a4 4 0 0 1 0-7 5 5 0 0 1 8-1 4 4 0 0 1 1 8z" fill="#b9cdf0" /><circle cx="15" cy="5" r="5" fill="#e8697c" /><text x="15" y="8" textAnchor="middle" fontSize="8" fill="#222">2</text></svg>
            <span>23°C<br />Mayorm. nublado</span>
          </Weather>
          <TaskCenter>
            <TaskButton aria-label="Inicio"><svg width="16" height="16" viewBox="0 0 16 16"><path d="M0 0h7.700v7.700H0zM8.300 0H16v7.700H8.300zM0 8.300h7.700V16H0zM8.300 8.300H16V16H8.300z" fill="#35b5ee" /></svg></TaskButton>
            <TaskSearch>
              <Icon name="search" size={12} />
              <input type="search" placeholder="Buscar" aria-label="Buscar" />
              <svg width="30" height="18" viewBox="0 0 30 18"><path d="M3 16Q0 12 3 8 8 1 15 2t11 5q3 4 1 9z" fill="#6a4d9c" /><path d="M12 6q8-5 15 3l-1 5-9-3z" fill="#3fb58d" /><path d="M1 15q6-3 8-7l4 2 3-2 5 5 8 2q-2 2-5 2H5z" fill="#1d2470" /><path d="M9 11l4-3 6 5-8-1z" fill="#c9c58e" /></svg>
            </TaskSearch>
            <TaskApps>
              <TaskButton aria-label="Vista de tareas"><svg width="17" height="16" viewBox="0 0 17 16"><path d="M5 1h12v10H5z" fill="#e8e8e8" /><path d="M1 5h11v9H1z" fill="#8a8a8a" opacity=".9" /></svg></TaskButton>
              <TaskButton aria-label="Copilot"><svg width="17" height="16" viewBox="0 0 17 16"><path d="M5 1h6l-3 9H1q-1-4 1-6z" fill="#2f8fe0" /><path d="M10 1q3 0 3 4h3q1 3-1 7l-4 3H9l3-9z" fill="#a667dd" /><path d="M8 1h3q2 0 2 4H9z" fill="#3b57c8" /><path d="M2 10h5l2-4h3L9 13q-1 2-3 2-4 0-4-5z" fill="#e8a23c" /><path d="M9 13l3-7h3q2 3 0 6t-6 3z" fill="#e0587c" /></svg></TaskButton>
              <TaskButton aria-label="Explorador"><svg width="17" height="15" viewBox="0 0 17 15"><path d="M0 1h6l2 2h8.500v11.500H0z" fill="#f0b429" /><path d="M0 5h17v9.500H0z" fill="#fad45c" /><path d="M4 9.500h9v5H4z" fill="#2480c8" /></svg></TaskButton>
              <TaskButton aria-label="Tienda"><svg width="16" height="17" viewBox="0 0 16 17"><path d="M4.500 5V1.500h7V5" fill="none" stroke="#38a5e0" strokeWidth="1.5" /><path d="M0 4h16v11q0 2-2 2H2q-2 0-2-2z" fill="#f0f0f0" /><path d="M5 7h3v3H5z" fill="#e35a3a" /><path d="M8.500 7h3v3h-3z" fill="#7cb53a" /><path d="M5 10.500h3v3H5z" fill="#3d8fe0" /><path d="M8.500 10.500h3v3h-3z" fill="#f0b429" /></svg></TaskButton>
              <TaskButton aria-label="Brave"><svg width="15" height="16" viewBox="0 0 15 16"><path d="M4 0h7l2 2 1.500 1-1 7-2.500 3.500L7.500 16 4 13.500 1.500 10l-1-7L2 2z" fill="#e8383c" /><path d="M3 4.500l3 .5 1.500-1L9 5l3-.5.500 2L10 10l.500 1.500-3 2-3-2L5 10 2.500 6.500z" fill="#fff" /><path d="M4.500 7l2 .7M10.500 7l-2 .7M7.500 8v3" stroke="#e8383c" fill="none" /></svg><Running /></TaskButton>
              <TaskButton $on aria-label="TradingView"><svg width="16" height="16" viewBox="0 0 16 16"><rect width="16" height="16" rx="3" fill="#000" /><path d="M1.500 5h5.500v6.500H4V7.500H1.500z" fill="#fff" /><circle cx="9" cy="6.2" r="1.2" fill="#fff" /><path d="M11.500 5h3.500l-3 6.500H9z" fill="#fff" /></svg><Running $on /></TaskButton>
              <TaskButton aria-label="Finanzas"><svg width="17" height="16" viewBox="0 0 17 16"><path d="M6 1l3-1 2 2v3H6z" fill="#5c9a4a" /><path d="M3 8l4-4h3l4 5-3 6H3z" fill="#a8c957" /><circle cx="4" cy="12.5" r="3.5" fill="#e8c14a" /><circle cx="13.5" cy="12.5" r="3" fill="#2f86c8" /><circle cx="8.5" cy="9.5" r="4" fill="#e9eecb" /><path d="M10 8q-3-1.500-3 .3t3 1.200T7 11" fill="none" stroke="#4b7a30" /></svg></TaskButton>
              <TaskButton aria-label="WhatsApp"><FaWhatsapp size={18} color="#2ed468" /><AppBadge>3</AppBadge><Running /></TaskButton>
              <TaskButton aria-label="Notion"><SiNotion size={14} color="#e8e8e8" /></TaskButton>
              <TaskButton aria-label="Telegram"><Telegram /></TaskButton>
              <TaskButton aria-label="Chrome"><Chrome /></TaskButton>
              <TaskButton aria-label="OBS"><SiObsstudio size={15} color="#b8b8b8" /><RecDot /><Running /></TaskButton>
              <TaskButton aria-label="Spotify"><SiSpotify size={16} color="#2bd566" /><Running /></TaskButton>
            </TaskApps>
          </TaskCenter>
          <Tray>
            <Icon name="chevUp" size={8} />
            <svg width="13" height="9" viewBox="0 0 13 9"><path d="M3 9a3 3 0 0 1 0-5.500 4 4 0 0 1 7-.500A3 3 0 0 1 10.500 9z" fill="#cfd2d6" /></svg>
            <svg width="8" height="12" viewBox="0 0 8 12" fill="none" stroke="#c98a6c"><rect x="2.5" y=".5" width="3" height="6.5" rx="1.5" /><path d="M.5 5.500a3.500 3.500 0 0 0 7 0M4 9v3" /></svg>
            <TrayLang>ESP<br />LAA</TrayLang>
            <TrayGroup>
              <svg width="11" height="9" viewBox="0 0 11 9" fill="none" stroke="#e0e0e0"><path d="M.5 3q5-4.500 10 0M2.500 5q3-2.500 6 0M4.500 7q1-1 2 0" /></svg>
              <svg width="12" height="10" viewBox="0 0 12 10" fill="none" stroke="#e0e0e0"><path d="M.5 3.500h2L5.500 1v8l-3-2.500h-2zM7.500 3.500q1 1.500 0 3M9.500 2q2 3 0 6" /></svg>
              <svg width="15" height="9" viewBox="0 0 15 9"><rect x=".5" y="1.5" width="12" height="7" rx="2" fill="#7fbf7a" stroke="#d8d8d8" /><path d="M14 3.500v3" stroke="#d8d8d8" /><path d="M6.500 0v5M4.500 4l2 2 2-2" stroke="#fff" fill="none" /></svg>
            </TrayGroup>
            <TrayClock>22:00<br />19/01/2026</TrayClock>
          </Tray>
        </Taskbar>

        <Pointer><svg width="8" height="13" viewBox="0 0 8 13"><path d="M.5.5v10.500l2.300-2 1.400 3.300 1.500-.7-1.400-3.200h3z" fill="#fff" stroke="#222" strokeWidth=".6" /></svg></Pointer>
      </Page>
    </>
  );
}
